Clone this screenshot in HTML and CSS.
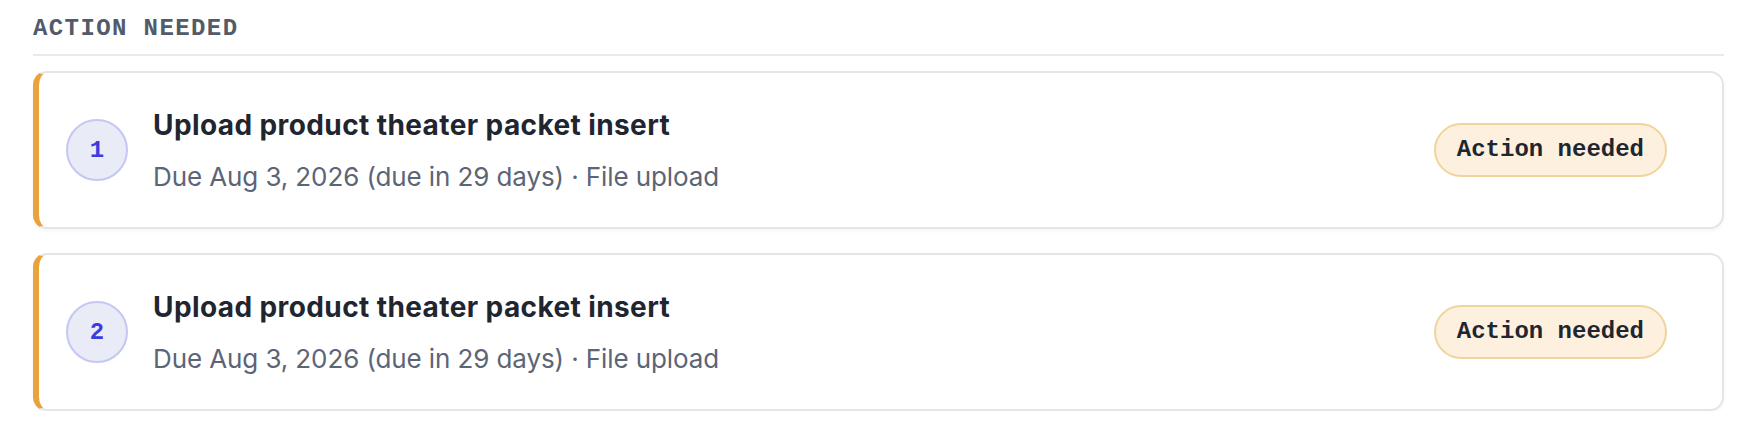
FILE: index.html
```html
<!DOCTYPE html>
<html lang="en">
<head>
<meta charset="utf-8">
<title>Action needed</title>
<link rel="stylesheet" href="styles.css">
</head>
<body>
  <section class="task-group">
    <h2 class="task-group__title">Action needed</h2>
    <ul class="task-list">
      <li class="task-card">
        <span class="task-card__index">1</span>
        <div class="task-card__body">
          <h3 class="task-card__name">Upload product theater packet insert</h3>
          <p class="task-card__meta">Due Aug 3, 2026 (due in 29 days) · File upload</p>
        </div>
        <span class="status-pill">Action needed</span>
      </li>
      <li class="task-card">
        <span class="task-card__index">2</span>
        <div class="task-card__body">
          <h3 class="task-card__name">Upload product theater packet insert</h3>
          <p class="task-card__meta">Due Aug 3, 2026 (due in 29 days) · File upload</p>
        </div>
        <span class="status-pill">Action needed</span>
      </li>
    </ul>
  </section>
</body>
</html>
```
FILE: styles.css
```css
* {
  box-sizing: border-box;
}

body {
  margin: 0;
  background: #ffffff;
  font-family: Inter, "Noto Sans", "Liberation Sans", sans-serif;
  color: #1f2630;
}

.task-group {
  padding: 14px 30px 0 33px;
}

.task-group__title {
  margin: 0;
  padding-bottom: 10px;
  border-bottom: 2px solid #e8eaee;
  font-family: "Liberation Mono", "DejaVu Sans Mono", monospace;
  font-size: 24px;
  line-height: 30px;
  font-weight: 700;
  letter-spacing: 1.4px;
  text-transform: uppercase;
  color: #525b69;
}

.task-list {
  list-style: none;
  margin: 15px 0 0;
  padding: 0;
  display: flex;
  flex-direction: column;
  gap: 24px;
}

.task-card {
  display: flex;
  align-items: center;
  height: 158px;
  padding: 0 55px 0 27px;
  border: 2px solid #e2e5ea;
  border-left: 6px solid #eaa33c;
  border-radius: 14px;
  background: #ffffff;
  box-shadow: 0 2px 4px rgba(16, 24, 40, 0.04);
}

.task-card__index {
  flex: none;
  width: 62px;
  height: 62px;
  display: flex;
  align-items: center;
  justify-content: center;
  border: 2px solid #c4c7f4;
  border-radius: 50%;
  background: #e9ebf6;
  font-family: "Liberation Mono", "DejaVu Sans Mono", monospace;
  font-size: 24px;
  font-weight: 700;
  color: #3b3ce0;
}

.task-card__body {
  flex: 1;
  margin-left: 25px;
  padding-top: 2px;
}

.task-card__name {
  margin: 0;
  font-size: 28px;
  line-height: 36px;
  font-weight: 700;
  letter-spacing: 0.4px;
  color: #1f2630;
}

.task-card__meta {
  margin: 16px 0 0;
  font-size: 26px;
  line-height: 36px;
  font-weight: 400;
  letter-spacing: -0.1px;
  color: #5b6576;
}

.status-pill {
  flex: none;
  padding: 10px 21px;
  border: 2px solid #f1d49c;
  border-radius: 999px;
  background: #fdf0de;
  font-family: "Liberation Mono", "DejaVu Sans Mono", monospace;
  font-size: 24px;
  line-height: 30px;
  font-weight: 700;
  color: #1f2630;
}
```
